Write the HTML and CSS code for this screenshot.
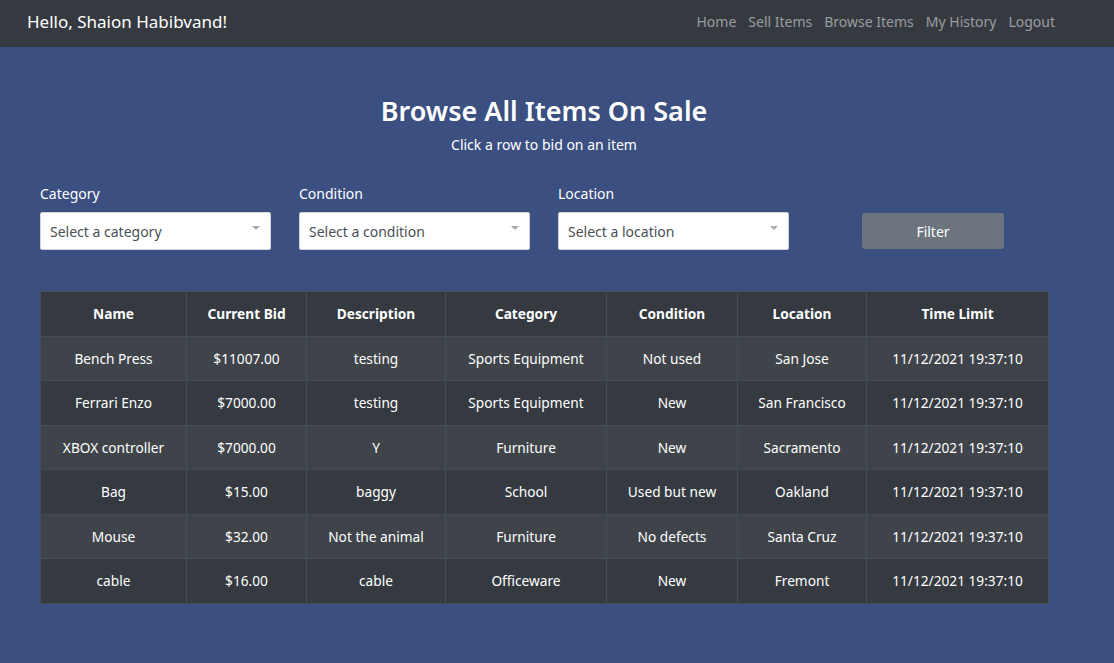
FILE: index.html
```html
<!DOCTYPE html>
<html>
<head>
<meta charset="utf-8">
<link rel="stylesheet" href="styles.css">
</head>
<body>
<nav class="navbar">
  <div class="brand">Hello, Shaion Habibvand!</div>
  <ul class="nav-links">
    <li><a href="#">Home</a></li>
    <li><a href="#">Sell Items</a></li>
    <li><a href="#">Browse Items</a></li>
    <li><a href="#">My History</a></li>
    <li><a href="#">Logout</a></li>
  </ul>
</nav>
<main class="content">
  <header class="page-head">
    <h1 class="title">Browse All Items On Sale</h1>
    <p class="subtitle">Click a row to bid on an item</p>
  </header>
  <form class="filters">
    <div class="field">
      <label class="field-label">Category</label>
      <div class="select"><span>Select a category</span><span class="caret"></span></div>
    </div>
    <div class="field">
      <label class="field-label">Condition</label>
      <div class="select"><span>Select a condition</span><span class="caret"></span></div>
    </div>
    <div class="field">
      <label class="field-label">Location</label>
      <div class="select"><span>Select a location</span><span class="caret"></span></div>
    </div>
    <div class="field btn-field">
      <button type="button" class="btn-filter">Filter</button>
    </div>
  </form>
  <table class="items">
    <colgroup>
      <col style="width:146px"><col style="width:120px"><col style="width:139px"><col style="width:161px"><col style="width:131px"><col style="width:129px"><col style="width:182px">
    </colgroup>
    <thead>
      <tr><th>Name</th><th>Current Bid</th><th>Description</th><th>Category</th><th>Condition</th><th>Location</th><th>Time Limit</th></tr>
    </thead>
    <tbody>
      <tr><td>Bench Press</td><td>$11007.00</td><td>testing</td><td>Sports Equipment</td><td>Not used</td><td>San Jose</td><td>11/12/2021 19:37:10</td></tr>
      <tr><td>Ferrari Enzo</td><td>$7000.00</td><td>testing</td><td>Sports Equipment</td><td>New</td><td>San Francisco</td><td>11/12/2021 19:37:10</td></tr>
      <tr><td>XBOX controller</td><td>$7000.00</td><td>Y</td><td>Furniture</td><td>New</td><td>Sacramento</td><td>11/12/2021 19:37:10</td></tr>
      <tr><td>Bag</td><td>$15.00</td><td>baggy</td><td>School</td><td>Used but new</td><td>Oakland</td><td>11/12/2021 19:37:10</td></tr>
      <tr><td>Mouse</td><td>$32.00</td><td>Not the animal</td><td>Furniture</td><td>No defects</td><td>Santa Cruz</td><td>11/12/2021 19:37:10</td></tr>
      <tr><td>cable</td><td>$16.00</td><td>cable</td><td>Officeware</td><td>New</td><td>Fremont</td><td>11/12/2021 19:37:10</td></tr>
    </tbody>
  </table>
</main>
</body>
</html>
```
FILE: styles.css
```css
* { box-sizing: border-box; }
html, body { margin: 0; padding: 0; }
body {
  font-family: "Noto Sans", "Open Sans", sans-serif;
  background: #3b4f80;
  color: #fff;
  min-height: 663px;
}
.navbar {
  height: 47px;
  background: #343a40;
  display: flex;
  align-items: center;
  justify-content: space-between;
  padding: 0 59px 5px 27px;
}
.brand {
  font-size: 17px;
  color: #fff;
}
.nav-links {
  list-style: none;
  margin: 0;
  padding: 0;
  display: flex;
  gap: 12px;
}
.nav-links a {
  color: rgba(255,255,255,.5);
  text-decoration: none;
  font-size: 14px;
}
.content {
  padding: 0 66px 0 40px;
}
.page-head {
  text-align: center;
  padding-top: 44px;
}
.title {
  margin: 0;
  font-size: 27px;
  font-weight: 600;
  line-height: 40px;
}
.subtitle {
  margin: 4px 0 0;
  font-size: 14px;
  line-height: 20px;
}
.filters {
  display: flex;
  margin-top: 30px;
  gap: 28px;
  align-items: flex-end;
}
.field {
  width: 231px;
  display: flex;
  flex-direction: column;
}
.field-label {
  font-size: 14px;
  line-height: 18px;
  margin-bottom: 9px;
}
.select {
  height: 38px;
  background: #fff;
  border: 1px solid #ced4da;
  border-radius: 2px;
  color: #495057;
  font-size: 14px;
  display: flex;
  align-items: center;
  justify-content: space-between;
  padding: 0 10px 0 9px;
}
.caret {
  width: 0; height: 0;
  border-left: 4px solid transparent;
  border-right: 4px solid transparent;
  border-top: 4px solid #aaa;
  margin-top: -6px;
}
.btn-field {
  margin-left: 45px;
  width: 142px;
}
.btn-filter {
  height: 36px;
  margin-bottom: 1px;
  background: #6c757d;
  border: none;
  border-radius: 3px;
  color: #fff;
  font-family: inherit;
  font-size: 14px;
}
.items {
  margin-top: 41px;
  width: 1008px;
  border-collapse: collapse;
  table-layout: fixed;
  background: #343a40;
  font-size: 13.7px;
}
.items th, .items td {
  border: 1px solid #454d55;
  text-align: center;
  height: 44.5px;
  padding: 0 4px;
  color: #fff;
}
.items th { font-weight: 700; }
.items tbody tr:nth-child(odd) { background: #3e444a; }
```
